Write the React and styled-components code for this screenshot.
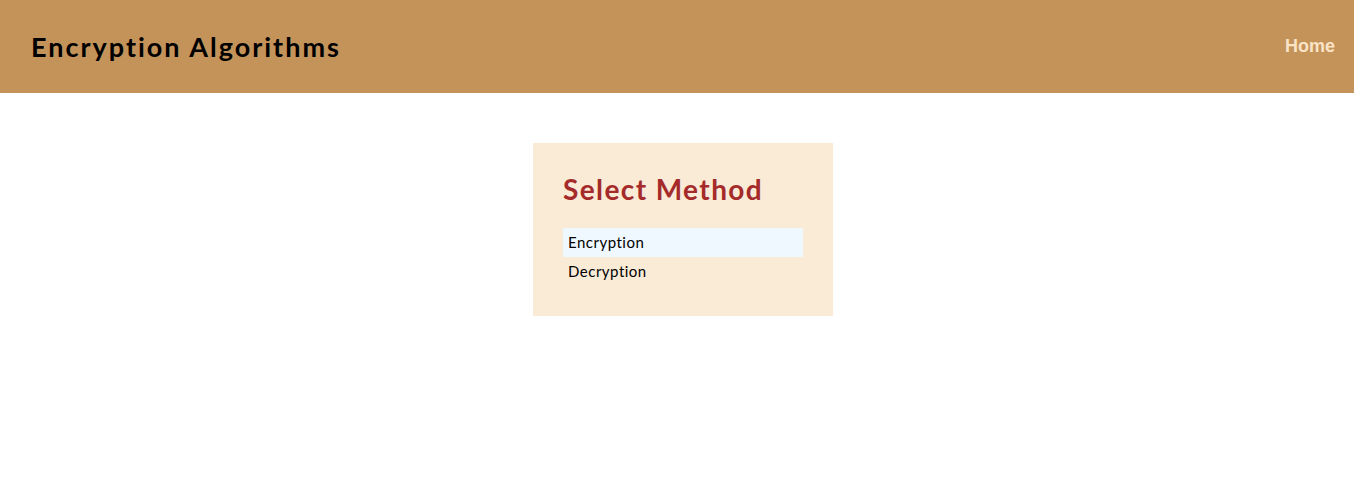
import React, { useState } from "react";
import styled, { createGlobalStyle } from "styled-components";

const Global = createGlobalStyle`
  html, body { margin: 0; padding: 0; background: #fff; }
  body { font-family: "Lato", "Open Sans", sans-serif; }
`;

const Header = styled.header`
  height: 93px;
  background: #c4935a;
  display: flex;
  align-items: center;
  justify-content: space-between;
  padding: 0 19px 0 31px;
  box-sizing: border-box;
`;

const Title = styled.h1`
  margin: 0 0 1px;
  font-size: 27px;
  font-weight: 700;
  color: #000;
  letter-spacing: 2px;
`;

const NavLink = styled.a`
  color: #fbe3c6;
  font-family: "Liberation Sans", Arial, sans-serif;
  font-weight: 700;
  font-size: 18px;
  text-decoration: none;
  cursor: pointer;
`;

const Main = styled.main`
  display: flex;
  justify-content: center;
  padding: 50px 0 0 12px;
`;

const Card = styled.section`
  width: 300px;
  box-sizing: border-box;
  background: #faebd7;
  padding: 30px;
`;

const Heading = styled.h2`
  margin: 0 0 22px;
  font-size: 28px;
  line-height: 33px;
  font-weight: 700;
  color: #a52a2a;
  letter-spacing: 1.4px;
`;

const List = styled.ul`
  list-style: none;
  margin: 0;
  padding: 0;
`;

const Item = styled.li`
  height: 29px;
  line-height: 29px;
  padding: 0 5px;
  font-size: 15px;
  color: #000;
  letter-spacing: 0.5px;
  cursor: pointer;
  background: ${(p) => (p.$active ? "#f0f8ff" : "transparent")};
`;

export default function App() {
  const [active, setActive] = useState(0);
  const items = ["Encryption", "Decryption"];
  return (
    <>
      <Global />
      <Header>
        <Title>Encryption Algorithms</Title>
        <NavLink>Home</NavLink>
      </Header>
      <Main>
        <Card>
          <Heading>Select Method</Heading>
          <List>
            {items.map((it, i) => (
              <Item key={it} $active={i === active} onMouseEnter={() => setActive(i)}>
                {it}
              </Item>
            ))}
          </List>
        </Card>
      </Main>
    </>
  );
}
